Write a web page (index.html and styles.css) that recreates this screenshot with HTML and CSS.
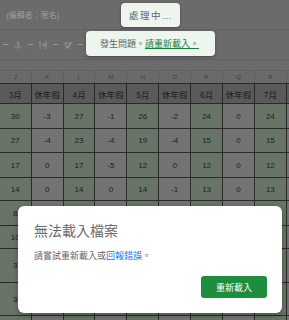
FILE: index.html
```html
<!DOCTYPE html>
<html lang="zh-Hant">
  <head>
    <meta charset="UTF-8" />
    <meta name="viewport" content="width=device-width, initial-scale=1.0" />
    <title>試算表</title>
    <link rel="stylesheet" href="styles.css">
  </head>
  <body>
    <div class="sheet">
      <div class="docbar">
        <span class="doc-meta">(編輯者：匿名)</span>
      </div>

      <div class="toolbar">
        <span class="caret"></span>
        <svg class="tool" viewBox="0 0 10 10">
          <path d="M5 1v4M3.5 3.6L5 5.2l1.5-1.6M2 7h6M5 8.2v0.8" />
        </svg>
        <span class="caret"></span>
        <svg class="tool" viewBox="0 0 10 10">
          <path d="M2 1v8M8 1v8M3.5 4h3.5a1 1 0 0 1 0 2H5M5.8 5.2L4.8 6l1 .8" />
        </svg>
        <span class="caret"></span>
        <svg class="tool" viewBox="0 0 10 10">
          <path d="M1.5 3h7L5 8.5zM2.5 8.5l6-6" />
        </svg>
        <span class="caret"></span>
      </div>

      <div class="formula-bar"></div>

      <div class="col-letters">
        <span>J</span><span>K</span><span>L</span><span>M</span><span>N</span>
        <span>O</span><span>P</span><span>Q</span><span>R</span><span></span>
      </div>

      <div class="grid">
        <div class="cell head">3月</div>
        <div class="cell head">休年假</div>
        <div class="cell head">4月</div>
        <div class="cell head">休年假</div>
        <div class="cell head">5月</div>
        <div class="cell head">休年假</div>
        <div class="cell head">6月</div>
        <div class="cell head">休年假</div>
        <div class="cell head">7月</div>
        <div class="cell head"></div>

        <div class="cell month">30</div><div class="cell leave">-3</div>
        <div class="cell month">27</div><div class="cell leave">-1</div>
        <div class="cell month">26</div><div class="cell leave">-2</div>
        <div class="cell month">24</div><div class="cell leave">0</div>
        <div class="cell month">24</div><div class="cell leave"></div>

        <div class="cell month">27</div><div class="cell leave">-4</div>
        <div class="cell month">23</div><div class="cell leave">-4</div>
        <div class="cell month">19</div><div class="cell leave">-4</div>
        <div class="cell month">15</div><div class="cell leave">0</div>
        <div class="cell month">15</div><div class="cell leave"></div>

        <div class="cell month">17</div><div class="cell leave">0</div>
        <div class="cell month">17</div><div class="cell leave">-5</div>
        <div class="cell month">12</div><div class="cell leave">0</div>
        <div class="cell month">12</div><div class="cell leave">0</div>
        <div class="cell month">12</div><div class="cell leave"></div>

        <div class="cell month">14</div><div class="cell leave">0</div>
        <div class="cell month">14</div><div class="cell leave">0</div>
        <div class="cell month">14</div><div class="cell leave">-1</div>
        <div class="cell month">13</div><div class="cell leave">0</div>
        <div class="cell month">13</div><div class="cell leave"></div>

        <div class="cell month">8</div><div class="cell leave"></div>
        <div class="cell month"></div><div class="cell leave"></div>
        <div class="cell month"></div><div class="cell leave"></div>
        <div class="cell month"></div><div class="cell leave"></div>
        <div class="cell month"></div><div class="cell leave"></div>

        <div class="cell month">10</div><div class="cell leave"></div>
        <div class="cell month"></div><div class="cell leave"></div>
        <div class="cell month"></div><div class="cell leave"></div>
        <div class="cell month"></div><div class="cell leave"></div>
        <div class="cell month"></div><div class="cell leave"></div>

        <div class="cell month">3</div><div class="cell leave"></div>
        <div class="cell month"></div><div class="cell leave"></div>
        <div class="cell month"></div><div class="cell leave"></div>
        <div class="cell month"></div><div class="cell leave"></div>
        <div class="cell month"></div><div class="cell leave"></div>

        <div class="cell month">3</div><div class="cell leave"></div>
        <div class="cell month"></div><div class="cell leave"></div>
        <div class="cell month"></div><div class="cell leave"></div>
        <div class="cell month"></div><div class="cell leave"></div>
        <div class="cell month"></div><div class="cell leave"></div>

        <div class="cell month"></div><div class="cell leave"></div>
        <div class="cell month"></div><div class="cell leave"></div>
        <div class="cell month"></div><div class="cell leave"></div>
        <div class="cell month"></div><div class="cell leave"></div>
        <div class="cell month"></div><div class="cell leave"></div>
      </div>
    </div>

    <div class="toasts">
      <div class="toast toast-busy">處理中…</div>
      <div class="toast toast-error">
        發生問題。<a class="toast-link" href="#">請重新載入。</a>
      </div>
    </div>

    <div class="dialog" role="alertdialog">
      <h2 class="dialog-title">無法載入檔案</h2>
      <p class="dialog-text">請嘗試重新載入或<a class="dialog-link" href="#">回報錯誤</a>。</p>
      <div class="dialog-actions">
        <button class="btn-reload">重新載入</button>
      </div>
    </div>
  </body>
</html>
```

FILE: styles.css
```css
body {
  margin: 0;
  width: 289px;
  height: 320px;
  overflow: hidden;
  background-color: #6b6b6b;
  font-family: "Liberation Sans", "Noto Sans CJK TC", sans-serif;
  position: relative;
}

.sheet {
  height: 320px;
  overflow: hidden;
}

.docbar {
  height: 29px;
  border-bottom: 1px solid #626262;
  display: flex;
  align-items: center;
  padding-left: 6px;
}

.doc-meta {
  font-size: 8px;
  color: #9c9c9c;
}

.toolbar {
  height: 29px;
  border-bottom: 1px solid #626262;
  display: flex;
  align-items: center;
  padding-left: 3px;
  gap: 5px;
}

.caret {
  width: 5px;
  height: 1.5px;
  background-color: #959595;
}

.tool {
  width: 10px;
  height: 10px;
  fill: none;
  stroke: #959595;
  stroke-width: 1;
}

.formula-bar {
  height: 10px;
}

.col-letters {
  display: grid;
  grid-template-columns: repeat(10, 30.9px);
  gap: 1px;
  height: 12px;
  margin-left: -0.2px;
  background-color: #5f5f5f;
  border-top: 1px solid #606060;
}

.col-letters span {
  background-color: #6a6a6a;
  color: #3c3c3c;
  font-size: 6px;
  display: flex;
  align-items: center;
  justify-content: center;
}

.grid {
  display: grid;
  grid-template-columns: repeat(10, 30.9px);
  grid-template-rows: 19px 24px 23px 24px 22px 24px 22px 33px 32px 30px;
  gap: 1px;
  margin-left: -0.2px;
  background-color: #2a2a2a;
  border-top: 1px solid #2a2a2a;
}

.cell {
  display: flex;
  align-items: center;
  justify-content: center;
  font-size: 8px;
  color: #1c1c1c;
}

.head {
  background-color: #5a5a5a;
  font-size: 8.5px;
}

.month {
  background-color: #687566;
}

.leave {
  background-color: #737374;
}

.toasts {
  position: absolute;
  top: 3px;
  left: 12px;
  right: 0;
  display: flex;
  flex-direction: column;
  align-items: center;
  gap: 4px;
}

.toast {
  height: 24px;
  display: flex;
  align-items: center;
  background-color: #eef4ee;
  border-radius: 4px;
  box-shadow: 0 1px 3px rgba(0, 0, 0, 0.35);
  font-size: 9px;
  color: #5f6368;
  white-space: nowrap;
}

.toast-busy {
  padding: 0 7px 0 8px;
  font-size: 9.5px;
  letter-spacing: 1.5px;
}

.toast-error {
  height: 25px;
  padding: 0 16px 0 14px;
}

.toast-link {
  color: #188038;
  text-decoration: underline;
}

.dialog {
  position: absolute;
  left: 18px;
  top: 206px;
  width: 264px;
  height: 107px;
  box-sizing: border-box;
  padding: 16px 15px 15px 16px;
  display: flex;
  flex-direction: column;
  background-color: #ffffff;
  border-radius: 6px;
  box-shadow: 0 2px 6px rgba(0, 0, 0, 0.3);
}

.dialog-title {
  margin: 0;
  font-size: 14px;
  line-height: 18px;
  font-weight: normal;
  color: #6a6c6f;
}

.dialog-text {
  margin: 10px 0 0;
  font-size: 9px;
  line-height: 12px;
  color: #5f6368;
}

.dialog-link {
  color: #1a73e8;
  text-decoration: none;
}

.dialog-actions {
  margin-top: auto;
  display: flex;
  justify-content: flex-end;
}

.btn-reload {
  width: 66px;
  height: 22px;
  border: none;
  border-radius: 3px;
  background-color: #1e8e3e;
  color: #ffffff;
  font-family: inherit;
  font-size: 9px;
  padding: 0;
}
```
